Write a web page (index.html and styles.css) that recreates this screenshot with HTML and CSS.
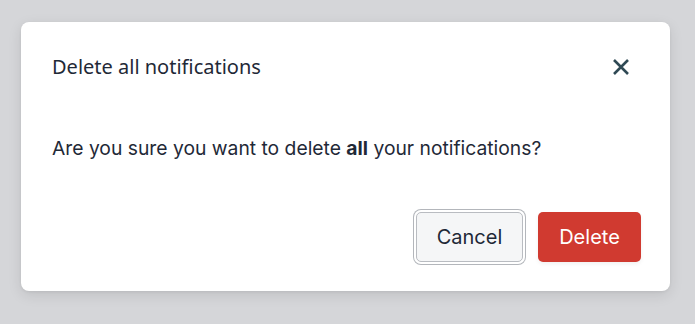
FILE: index.html
```html
<!DOCTYPE html>
<html lang="en">
<head>
<meta charset="utf-8">
<title>Delete all notifications</title>
<link rel="stylesheet" href="styles.css">
</head>
<body>
<div class="modal" role="dialog" aria-labelledby="modal-title">
  <div class="modal-header">
    <h2 class="modal-title" id="modal-title">Delete all notifications</h2>
    <button class="close-btn" aria-label="Close">
      <svg width="18" height="18" viewBox="0 0 18 18" aria-hidden="true">
        <path d="M2 2 L16 16 M16 2 L2 16" stroke="#2f4954" stroke-width="2.6" stroke-linecap="butt" fill="none"/>
      </svg>
    </button>
  </div>
  <p class="modal-body">Are you sure you want to delete <strong>all</strong> your notifications?</p>
  <div class="modal-footer">
    <button class="btn btn-secondary">Cancel</button>
    <button class="btn btn-danger">Delete</button>
  </div>
</div>
</body>
</html>
```
FILE: styles.css
```css
html, body {
  margin: 0;
  height: 100%;
}
body {
  background: #d5d6d9;
  padding: 22px 0 0 21px;
  box-sizing: border-box;
  font-family: Inter, "Noto Sans", sans-serif;
  color: #1f2937;
}
.modal {
  width: 649px;
  height: 269px;
  box-sizing: border-box;
  background: #fff;
  border-radius: 8px;
  box-shadow: 0 4px 14px rgba(0, 0, 0, 0.10), 0 1px 3px rgba(0, 0, 0, 0.06);
  padding: 30px 29px 29px 31px;
  display: flex;
  flex-direction: column;
}
.modal-header {
  display: flex;
  align-items: center;
  justify-content: space-between;
  height: 30px;
}
.modal-title {
  margin: 0;
  font-family: "Noto Sans", sans-serif;
  font-weight: 400;
  font-size: 20px;
  line-height: 30px;
  color: #1f2937;
}
.close-btn {
  background: none;
  border: 0;
  padding: 0;
  margin-right: 11px;
  width: 18px;
  height: 18px;
  display: flex;
  cursor: pointer;
}
.modal-body {
  margin: 52px 0 0;
  font-size: 19.3px;
  line-height: 28px;
  color: #1f2937;
}
.modal-body strong {
  font-weight: 700;
}
.modal-footer {
  margin-top: auto;
  display: flex;
  justify-content: flex-end;
  gap: 15px;
}
.btn {
  height: 50px;
  border-radius: 5px;
  font-family: Inter, sans-serif;
  font-size: 20px;
  padding: 0;
  cursor: pointer;
}
.btn-secondary {
  width: 107px;
  background: #f5f6f7;
  color: #1f2937;
  border: 1px solid #b9bcc1;
  box-shadow: 0 0 0 2px #fff, 0 0 0 3px #b3b6bb;
}
.btn-danger {
  width: 103px;
  background: #d03a30;
  color: #fff;
  border: 0;
  box-shadow: 0 2px 4px rgba(0, 0, 0, 0.06);
}
```
